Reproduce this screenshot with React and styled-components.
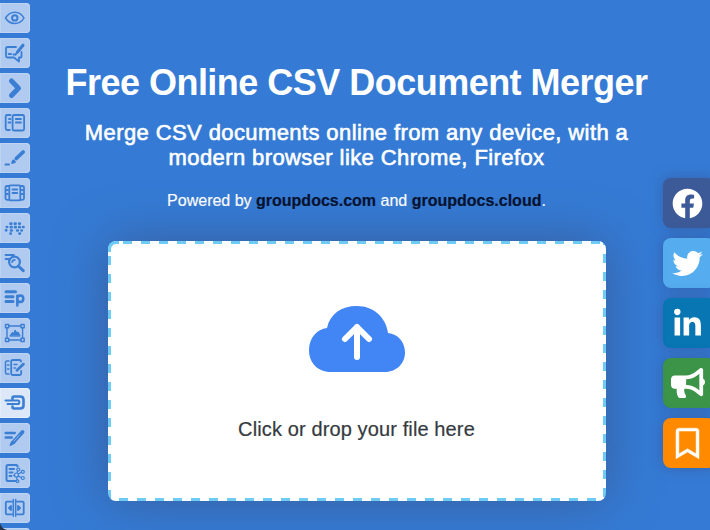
import React from "react";
import styled, { createGlobalStyle } from "styled-components";
import { FaBullhorn } from "react-icons/fa";

const GlobalStyle = createGlobalStyle`
  * { box-sizing: border-box; }
  body {
    margin: 0;
    overflow: hidden;
    background: #357bd5;
    font-family: "Liberation Sans", Arial, sans-serif;
  }
`;

const Page = styled.div`
  position: relative;
  display: grid;
  grid-template-columns: 30px 1fr 47px;
  width: 710px;
  height: 530px;
  overflow: hidden;
  background: #357bd5;
`;

const ToolRail = styled.nav`
  display: flex;
  flex-direction: column;
  gap: 5px;
  padding-top: 3px;
  height: 530px;
  overflow: hidden;
`;

const Tool = styled.a`
  flex: none;
  display: flex;
  align-items: center;
  width: 30px;
  height: 30px;
  padding-left: 4px;
  border-radius: 0 4px 4px 0;
  background: ${(p) => (p.$active ? "#dce7f7" : "#b1caef")};
  box-shadow: inset 0 0 0 1px ${(p) => (p.$active ? "#e6eefa" : "#bdd3f2")};
`;

const ToolIcon = styled.svg`
  display: block;
  width: 22px;
  height: 22px;
  fill: none;
  stroke: #3b7fd4;
  stroke-width: 1.8;
  stroke-linecap: round;
  stroke-linejoin: round;
`;

const Main = styled.main`
  display: flex;
  flex-direction: column;
  align-items: center;
  padding: 62px 0 0 20px;
  color: #fff;
  text-align: center;
`;

const Title = styled.h1`
  margin: 0;
  height: 42px;
  line-height: 42px;
  font-size: 36px;
  font-weight: 700;
  letter-spacing: -0.52px;
  white-space: nowrap;
`;

const Subtitle = styled.h2`
  margin: 17px 0 0;
  font-size: 22px;
  line-height: 24.5px;
  font-weight: 400;
  letter-spacing: 0.4px;
  -webkit-text-stroke: 0.6px #fff;
  white-space: nowrap;
`;

const Powered = styled.p`
  margin: 21px 0 0;
  height: 20px;
  line-height: 20px;
  font-size: 16px;
  -webkit-text-stroke: 0.2px;
  white-space: nowrap;
`;

const Brand = styled.a`
  color: #06122f;
  font-weight: 700;
`;

const dash = "#6ecbf5";

const DropZone = styled.div`
  position: relative;
  display: flex;
  flex-direction: column;
  align-items: center;
  width: 498px;
  height: 260px;
  margin-top: 30px;
  padding-top: 64px;
  border-radius: 8px;
  background:
    linear-gradient(90deg, ${dash} 9px, transparent 9px) 15px 0 / 18px 3px repeat-x,
    linear-gradient(90deg, ${dash} 9px, transparent 9px) 11px 100% / 18px 3px repeat-x,
    linear-gradient(${dash} 9px, transparent 9px) 0 15px / 3px 18px repeat-y,
    linear-gradient(${dash} 9px, transparent 9px) 100% 13px / 3px 18px repeat-y,
    #fff;
  box-shadow: 0 0 50px rgba(60, 66, 100, 0.5);

  &::before {
    content: "";
    position: absolute;
    top: 0;
    left: 0;
    width: 8px;
    height: 8px;
    border: solid ${dash};
    border-width: 3px 0 0 3px;
    border-radius: 8px 0 0 0;
  }
`;

const Cloud = styled.svg`
  display: block;
  width: 98px;
  height: 68px;
`;

const DropText = styled.span`
  margin-top: 43px;
  height: 26px;
  line-height: 26px;
  font-size: 20px;
  letter-spacing: 0.12px;
  color: #343a40;
  -webkit-text-stroke: 0.2px #343a40;
  white-space: nowrap;
`;

const ShareRail = styled.aside`
  display: flex;
  flex-direction: column;
  gap: 10px;
  padding-top: 178px;
`;

const Share = styled.a`
  display: flex;
  align-items: center;
  justify-content: center;
  width: 52px;
  height: 50px;
  padding-right: 3px;
  border-radius: 8px;
  background: ${(p) => p.$color};
  box-shadow: 0 0 14px rgba(50, 60, 110, 0.4);
`;

const ShareIcon = styled.svg`
  display: block;
  width: 33px;
  height: 33px;
  fill: #fff;
`;

const Bullhorn = styled(FaBullhorn)`
  width: 34px;
  height: 32px;
  color: #fff;
`;

const WindowCorner = styled.span`
  position: absolute;
  left: 0;
  bottom: 0;
  width: 8px;
  height: 8px;
  background: radial-gradient(circle at 100% 0, transparent 7.5px, #26334a 8.2px);
`;

const tools = [
  {
    name: "viewer",
    art: (
      <>
        <path d="M1.500 11C4 7 7 5.200 10.800 5.200S17.700 7 20 11c-2.300 4-5.400 5.500-9.200 5.500S4 15 1.500 11Z" strokeWidth="1.500" />
        <circle cx="10.800" cy="10.900" r="2.700" strokeWidth="2" />
      </>
    ),
  },
  {
    name: "annotation",
    art: (
      <>
        <path d="M12 5H3.500Q2 5 2 6.500V14q0 1.500 1.500 1.500H10l5 4v-4h1.500q1 0 1-1V10" />
        <path d="M13.500 10 19 3.200" strokeWidth="3" />
        <path d="m11.500 12.700 1.500-2M4.800 12H7M9.500 12.500h1" strokeWidth="2" />
      </>
    ),
  },
  {
    name: "conversion",
    art: <path d="m7.500 4 7 7.200-7 7.200" strokeWidth="5" />,
  },
  {
    name: "comparison",
    art: (
      <>
        <rect x="8.600" y="3" width="11.500" height="15.500" rx="1.500" />
        <path d="M6.500 3H3Q1.700 3 1.700 4.500v12Q1.700 18 3 18h2.800M6.500 7H5M6.500 10.500H4.500M11.800 7h5.200M11.800 10.500h5.200" />
      </>
    ),
  },
  {
    name: "signature",
    art: (
      <>
        <path d="m12.300 11.500 6.800-6.500" strokeWidth="3.800" />
        <path d="m8.500 15.700.8-2 1.300 1.200Z" strokeWidth="2.500" />
        <path d="M1.500 17.500H5" strokeWidth="2" />
      </>
    ),
  },
  {
    name: "assembly",
    art: (
      <>
        <rect x="5.300" y="3.300" width="11" height="15" rx="1" />
        <path d="M5 4H3Q1.500 4 1.500 5.500v10.800q0 1.500 1.500 1.500h2M16.500 4H18.500Q20 4 20 5.500v10.800q0 1.500-1.500 1.500h-2M3 8h1M3 12h1M17.500 8h1M17.500 12h1M8.500 7.500h4.700M8.500 11h4.700" />
      </>
    ),
  },
  {
    name: "redaction",
    art: (
      <g strokeWidth="2.700">
        <path d="M6.500 6.700h.8M10.800 6.700h.8M15.200 6.700h.6M2.800 10h.3M6.800 10.200h.8M11 10.200h.8M15.200 10.200h.5M19 10h.5M2 13.300h.3M7 13.500h.8M13.200 13.500h.6M17.500 13.500h.3M6.500 16.600h.3M15.500 16.600h.4" />
      </g>
    ),
  },
  {
    name: "search",
    art: (
      <>
        <path d="M1.700 3h8M1.700 7h3" strokeWidth="2.200" />
        <circle cx="10.500" cy="10" r="5.400" strokeWidth="2.200" />
        <path d="m14.800 14.500 4.500 4.200" strokeWidth="3" />
        <path d="M8 10q.6-1.800 2.800-2.100" />
      </>
    ),
  },
  {
    name: "parser",
    art: (
      <>
        <path d="M2 4.800h9.500M2 9.700h7M2 14.400h7" strokeWidth="3" />
        <path d="M13.300 18.500V8.700M13.300 11.700q0-3.200 3-3.200t3 3.200-3 3.200-3-3.200Z" strokeWidth="2.500" />
      </>
    ),
  },
  {
    name: "watermark",
    art: (
      <>
        <g strokeWidth="1.400">
          <path d="M4.500 4h12.600M4.500 18h12.600M3 5.700v10.600M18.600 5.700v10.600" />
          <rect x="1.500" y="2.500" width="3.200" height="3.200" />
          <rect x="17" y="2.500" width="3.200" height="3.200" />
          <rect x="1.500" y="16.300" width="3.200" height="3.200" />
          <rect x="17" y="16.300" width="3.200" height="3.200" />
        </g>
        <path d="m6 13.800 2.400-3.500 1.200 1L11.200 8l1.700 3 1.300-1 1.800 3.800Z" fill="#3b7fd4" strokeWidth="1" />
      </>
    ),
  },
  {
    name: "editor",
    art: (
      <>
        <path d="M17 4.500Q17 3 15.500 3H8.800Q7.200 3 7.200 4.500v12q0 1.500 1.500 1.500h7q1.500 0 1.500-1.500V14" />
        <path d="M5 4H3Q1.500 4 1.500 5.500v10Q1.500 17 3 17h2M3.500 8H5M3.500 12H5M10 7.500h3M10 11h1.500" strokeWidth="1.500" />
        <path d="m13 13.300 6.500-6.200" strokeWidth="2.700" />
      </>
    ),
  },
  {
    name: "merger",
    active: true,
    art: (
      <>
        <path d="M8.500 7V6Q8.500 4.500 10 4.500h6q3.500 0 3.500 3v6q0 3-3.500 3h-6q-1.500 0-1.500-1.500v-.5" strokeWidth="2.600" />
        <path d="M1.500 8.500H14q1.300 0 1.300 1.800T14 12.100H3.500" strokeWidth="2" />
      </>
    ),
  },
  {
    name: "metadata",
    art: (
      <>
        <path d="M1.700 6h9M1.700 10.500h6" strokeWidth="2.500" />
        <path d="M9.500 15 18.500 5" strokeWidth="3.900" />
        <path d="m6.500 18 1.500-3 2 1.300Z" fill="#3b7fd4" />
        <path d="m10 14 5.500-6" stroke="#b1caef" strokeWidth=".7" />
      </>
    ),
  },
  {
    name: "classification",
    art: (
      <>
        <path d="M13.500 4.500Q13.500 3 12 3H4Q2.500 3 2.500 4.500v13Q2.500 19 4 19h7.500M5.500 7H10M5.500 10.500h3M5.500 14h2" strokeWidth="2" />
        <g strokeWidth="1.200">
          <path d="m12.500 13 1.500-5M12.500 13l5.500-3M12.500 13l5.500 3M12.500 13l.5 5M12.500 13l-3 .5" />
          <g fill="#b1caef">
            <circle cx="12.500" cy="13" r="2" />
            <circle cx="14.300" cy="7.500" r="1.500" />
            <circle cx="18.800" cy="9.800" r="1.500" />
            <circle cx="18.800" cy="16" r="1.500" />
            <circle cx="13.500" cy="19.200" r="1.300" />
          </g>
        </g>
      </>
    ),
  },
  {
    name: "splitter",
    art: (
      <>
        <path d="M8 4.700H2.800q-1 0-1 1v10.600q0 1 1 1H8M13 4.700h5.700q1 0 1 1v10.600q0 1-1 1H13" />
        <path d="M9.300 2.500v16.800M11.700 2.500v16.800" strokeWidth="1.500" />
        <path d="m7 9-2 2 2 2ZM14 9l2 2-2 2Z" fill="#3b7fd4" />
      </>
    ),
  },
  { name: "next", art: null },
];

const shares = [
  {
    name: "Facebook",
    color: "#3c5a98",
    art: <path d="M504 256C504 119 393 8 256 8S8 119 8 256c0 123.780 90.690 226.380 209.250 245V327.690h-63V256h63v-54.640c0-62.150 37-96.480 93.670-96.480 27.140 0 55.520 4.840 55.520 4.840v61h-31.280c-30.800 0-40.410 19.120-40.410 38.730V256h68.780l-11 71.690h-57.780V501C413.310 482.380 504 379.780 504 256Z" />,
  },
  {
    name: "Twitter",
    color: "#55acee",
    art: <path d="M459.370 151.716c.325 4.548.325 9.097.325 13.645 0 138.720-105.583 298.558-298.558 298.558-59.452 0-114.680-17.219-161.137-47.106 8.447.974 16.568 1.299 25.340 1.299 49.055 0 94.213-16.568 130.274-44.832-46.132-.975-84.792-31.188-98.112-72.772 6.498.974 12.995 1.624 19.818 1.624 9.421 0 18.843-1.300 27.614-3.573-48.081-9.747-84.143-51.980-84.143-102.985v-1.299c13.969 7.797 30.214 12.670 47.431 13.319-28.264-18.843-46.781-51.005-46.781-87.391 0-19.492 5.197-37.360 14.294-52.954 51.655 63.675 129.300 105.258 216.365 109.807-1.624-7.797-2.599-15.918-2.599-24.040 0-57.828 46.782-104.934 104.934-104.934 30.213 0 57.502 12.670 76.670 33.137 23.715-4.548 46.456-13.320 66.599-25.340-7.798 24.366-24.366 44.833-46.132 57.827 21.117-2.273 41.584-8.122 60.426-16.243-14.292 20.791-32.161 39.308-52.628 54.253Z" />,
  },
  {
    name: "LinkedIn",
    color: "#0976b4",
    art: <path transform="translate(32 8)" d="M100.280 448H7.400V148.900h92.880ZM53.790 108.100C24.090 108.100 0 83.500 0 53.800a53.790 53.790 0 0 1 107.580 0c0 29.700-24.100 54.300-53.790 54.300ZM447.900 448h-92.680V302.400c0-34.700-.7-79.200-48.290-79.200-48.290 0-55.690 37.700-55.690 76.700V448h-92.780V148.900h89.080v40.800h1.300c12.400-23.500 42.690-48.300 87.880-48.300 94 0 111.280 61.900 111.280 142.300V448Z" />,
  },
  { name: "Announce", color: "#3c9449", icon: Bullhorn },
  {
    name: "Bookmark",
    color: "#ff8a00",
    art: <path transform="translate(64 0)" stroke="#fff" strokeWidth="8" d="M336 0H48C21.490 0 0 21.490 0 48v464l192-112 192 112V48c0-26.510-21.490-48-48-48Zm0 428.430-144-84-144 84V54a6 6 0 0 1 6-6h276c3.314 0 6 2.683 6 5.996V428.430Z" />,
  },
];

export default function App() {
  return (
    <>
      <GlobalStyle />
      <Page>
        <ToolRail>
          {tools.map((t) => (
            <Tool key={t.name} $active={t.active}>
              <ToolIcon viewBox="0 0 22 22">{t.art}</ToolIcon>
            </Tool>
          ))}
        </ToolRail>
        <Main>
          <Title>Free Online CSV Document Merger</Title>
          <Subtitle>
            Merge CSV documents online from any device, with a
            <br />
            modern browser like Chrome, Firefox
          </Subtitle>
          <Powered>
            Powered by <Brand>groupdocs.com</Brand> and <Brand>groupdocs.cloud</Brand>.
          </Powered>
          <DropZone>
            <Cloud viewBox="0 0 98 68">
              <path fill="#4285f4" d="M23 67C9 67 1 57 1 45S9 24 19 23C22 9 33 1 49 1s29 11 31 27c10 1 17 9 17 19.500S89 67 77 67Z" />
              <path fill="none" stroke="#fff" strokeWidth="6" strokeLinecap="round" strokeLinejoin="round" d="M49 52V22M37 34l12-12 12 12" />
            </Cloud>
            <DropText>Click or drop your file here</DropText>
          </DropZone>
        </Main>
        <ShareRail>
          {shares.map(({ name, color, icon: Icon, art }) => (
            <Share key={name} $color={color}>
              {Icon ? <Icon /> : <ShareIcon viewBox="-20 -20 552 552">{art}</ShareIcon>}
            </Share>
          ))}
        </ShareRail>
        <WindowCorner />
      </Page>
    </>
  );
}
